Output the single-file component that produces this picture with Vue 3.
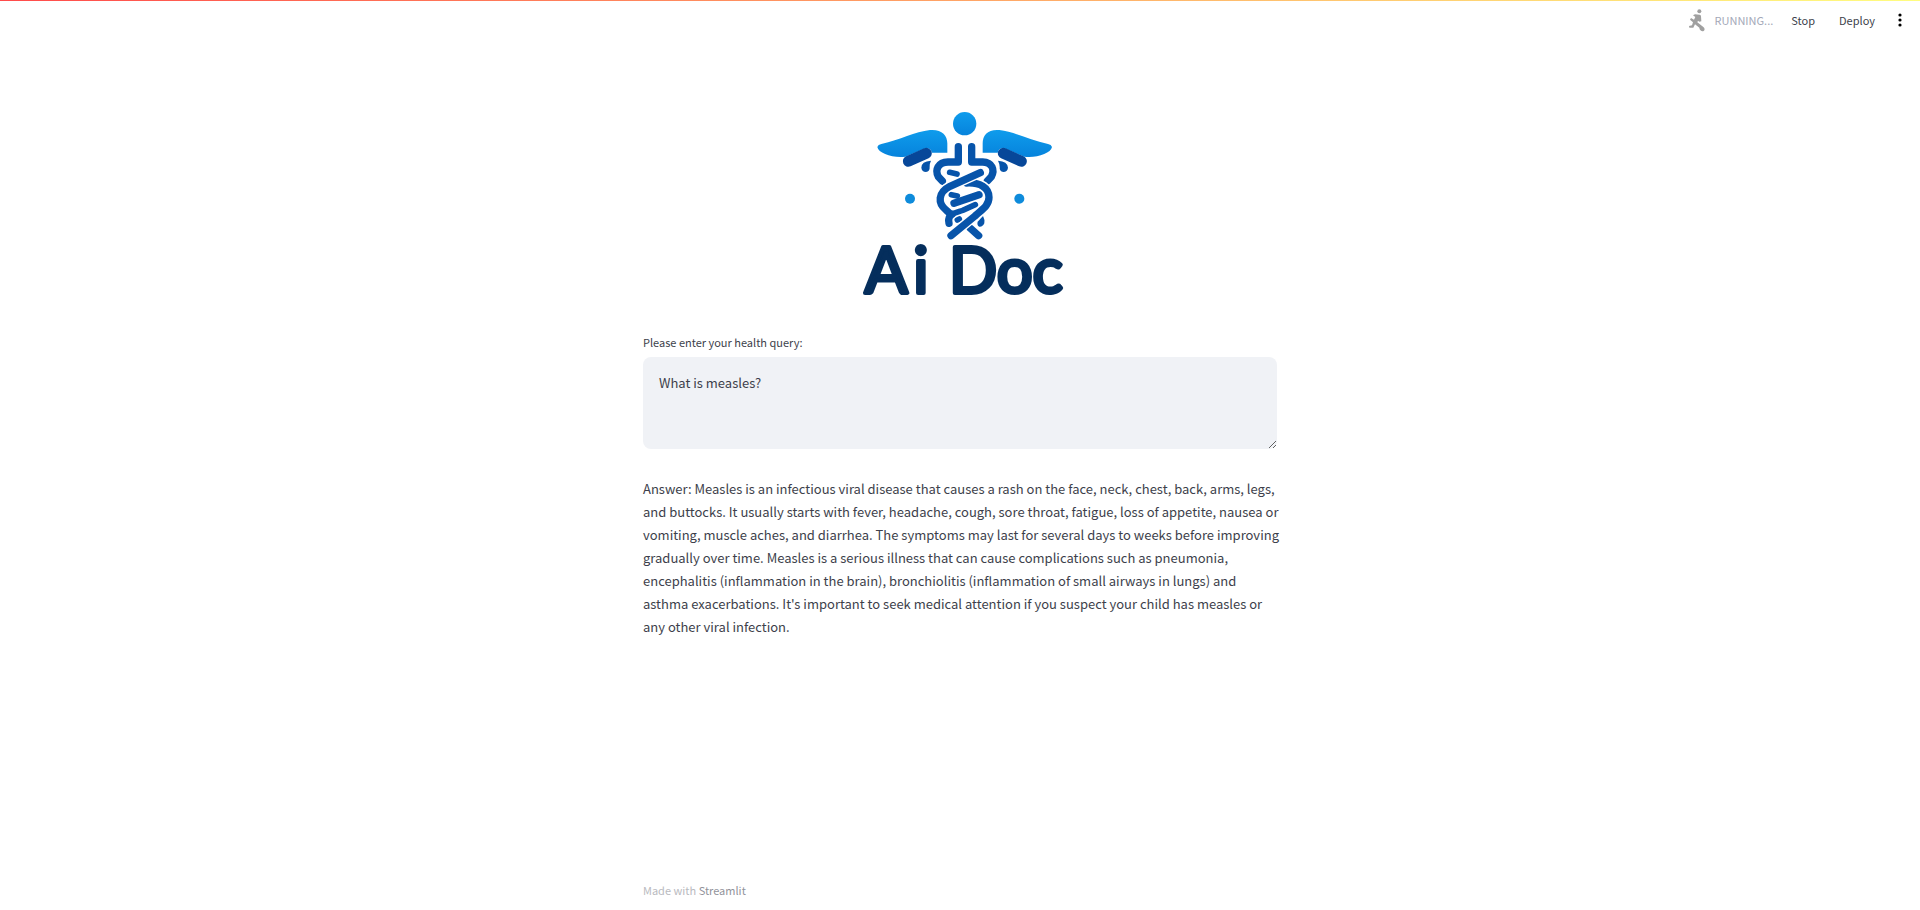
<script setup>
import { ref } from 'vue'

const query = ref('What is measles?')
const answer = [
  'Answer: Measles is an infectious viral disease that causes a rash on the face, neck, chest, back, arms, legs,',
  'and buttocks. It usually starts with fever, headache, cough, sore throat, fatigue, loss of appetite, nausea or',
  'vomiting, muscle aches, and diarrhea. The symptoms may last for several days to weeks before improving',
  'gradually over time. Measles is a serious illness that can cause complications such as pneumonia,',
  'encephalitis (inflammation in the brain), bronchiolitis (inflammation of small airways in lungs) and',
  "asthma exacerbations. It's important to seek medical attention if you suspect your child has measles or",
  'any other viral infection.',
].join('\n')
</script>

<template>
  <div class="app">
    <div class="decoration"></div>
    <header class="toolbar">
      <div class="status">
        <svg class="runner" viewBox="45 25 54 72" aria-hidden="true">
          <circle cx="79" cy="35" r="6" />
          <path d="M66 44 L80 45 Q84 46 84 50 L85 65 L79 66 L75 63 L73 68 L91 82 Q98 88 92 94 Q85 97 80 89 L79 84 L66 74 L61 84 L49 84 L48 79 L57 77 L60 68 L51 60 L54 55 L63 60 L67 52 L60 47 Z" />
        </svg>
        <span>RUNNING...</span>
      </div>
      <button class="stop" type="button">Stop</button>
      <button class="deploy" type="button">Deploy</button>
      <button class="menu" type="button" aria-label="Main menu">
        <svg viewBox="0 0 16 16" aria-hidden="true">
          <circle cx="8" cy="3" r="1.6" />
          <circle cx="8" cy="8" r="1.6" />
          <circle cx="8" cy="13" r="1.6" />
        </svg>
      </button>
    </header>

    <main class="content">
      <svg class="logo" viewBox="-15 0 690 630" role="img" aria-label="Ai Doc">
        <defs>
          <linearGradient id="sky" x1="0" y1="0" x2="0" y2="1">
            <stop offset="0" stop-color="#0f9cec" />
            <stop offset="1" stop-color="#0683dc" />
          </linearGradient>
        </defs>
        <g fill="url(#sky)">
          <circle cx="344" cy="71" r="35" />
          <path d="M82 141 Q84 134 94 132 C150 120 195 95 240 90 C274 87 292 105 292 130 L292 158 L246 158 Q242 143 226 145 L166 170 C130 175 85 160 82 141 Z" />
          <path d="M606 141 Q604 134 594 132 C538 120 493 95 448 90 C414 87 398 105 398 130 L398 158 L443 158 Q447 143 463 145 L523 170 C558 175 603 160 606 141 Z" />
        </g>
        <circle cx="180" cy="296" r="15" fill="#0e8bdb" />
        <circle cx="508" cy="296" r="15" fill="#0e8bdb" />
        <g fill="none" stroke="#074799" stroke-width="33" stroke-linecap="round">
          <path d="M175 184 L229 160" />
          <path d="M514 184 L460 160" />
        </g>
        <g fill="#0754aa">
          <path d="M243 182 Q214 184 214 203 Q216 216 228 216 Q240 214 239 200 Q238 192 243 182 Z" />
          <path d="M444 182 Q473 184 474 203 Q472 216 460 216 Q448 214 449 200 Q449 192 444 182 Z" />
          <path d="M399 348 Q405 359 403 370 Q398 381 388 380 Q380 376 383 365 Z" />
        </g>
        <g class="strands">
          <path d="M325 140 L325 186 L294 186 C264 187 254 210 265 230 L277 243" />
          <path d="M365 140 L365 186 L398 186 C427 187 435 210 424 230 L412 243" />
          <path d="M299 217 L321 222" class="thin" />
          <path d="M304 284 L322 288" class="thin" />
          <path d="M322 360 L328 357" class="thin" />
          <path d="M361 385 L386 407" />
          <path d="M312 310 L387 284" />
          <path d="M360 249 C391 247 417 263 417 292 C417 318 394 330 375 348 L303 407" class="halo" />
          <path d="M350 249 C391 247 417 263 417 292 C417 318 394 330 375 348 L303 407" />
          <path d="M391 218 L300 259 C282 267 275 279 274 290" class="halo" />
          <path d="M391 218 L300 259 C263 278 263 310 288 330 L300 341" />
          <path d="M297 370 C290 342 307 341 338 331 L376 314" class="thin" />
          <path d="M297 370 C294 356 297 348 306 343" />
        </g>
        <g class="wordmark">
          <text x="44 190" y="578">Ai</text>
          <text x="297" y="578">Doc</text>
        </g>
      </svg>

      <form class="query" @submit.prevent>
        <label for="health-query">Please enter your health query:</label>
        <textarea id="health-query" v-model="query" spellcheck="false"></textarea>
      </form>
      <p class="answer">{{ answer }}</p>
    </main>

    <footer class="footer">Made with <a href="#">Streamlit</a></footer>
  </div>
</template>

<style>
body {
  margin: 0;
  background: #fff;
}
</style>

<style scoped>
.app {
  min-height: 100vh;
  display: flex;
  flex-direction: column;
  color: #3d3f4b;
  font-family: "Noto Sans CJK SC", "Noto Sans", sans-serif;
  font-size: 13px;
}
.decoration {
  height: 1px;
  background: linear-gradient(90deg, #ff4b4b, #fffd80);
}
.toolbar {
  display: flex;
  align-items: center;
  justify-content: flex-end;
  height: 38px;
  padding-right: 12px;
  font-size: 11px;
}
.status {
  display: flex;
  align-items: center;
  gap: 9px;
  margin-right: 18px;
  color: #a3a8b8;
}
.runner {
  width: 18px;
  height: 24px;
  fill: #a0a0a0;
}
button {
  padding: 0;
  border: 0;
  background: none;
  color: inherit;
  font: inherit;
  cursor: pointer;
}
.deploy {
  margin-left: 24px;
}
.menu {
  display: flex;
  margin-left: 17px;
  color: #31333f;
}
.menu svg {
  width: 16px;
  height: 16px;
}
.content {
  flex: 1;
  box-sizing: border-box;
  width: 100%;
  max-width: 634px;
  margin: 0 auto;
  padding-top: 61px;
}
.logo {
  display: block;
  width: 230px;
  margin: 0 auto;
}
.strands {
  fill: none;
  stroke: #0754aa;
  stroke-width: 22;
  stroke-linecap: round;
  stroke-linejoin: round;
}
.thin {
  stroke-width: 17;
}
.halo {
  stroke: #fff;
  stroke-width: 30;
  stroke-linecap: butt;
}
.wordmark {
  fill: #052e5c;
  stroke: #052e5c;
  stroke-width: 12;
  stroke-linejoin: round;
  font-family: Lato, sans-serif;
  font-size: 190px;
}
.query {
  display: flex;
  flex-direction: column;
  margin-top: 22px;
}
label {
  font-size: 11px;
  line-height: 20px;
}
textarea {
  box-sizing: border-box;
  width: 100%;
  height: 92px;
  margin-top: 5px;
  padding: 15px 16px;
  border: 0;
  border-radius: 8px;
  outline: 0;
  background: #f0f2f6;
  color: inherit;
  font: inherit;
  line-height: 22px;
  resize: vertical;
}
.answer {
  margin: 28px 0 0;
  line-height: 23px;
  white-space: pre;
}
.footer {
  box-sizing: border-box;
  width: 100%;
  max-width: 634px;
  margin: 0 auto;
  padding-bottom: 10px;
  color: #b9bac0;
  font-size: 11px;
  line-height: 20px;
}
.footer a {
  color: #92939b;
  text-decoration: none;
}
</style>
